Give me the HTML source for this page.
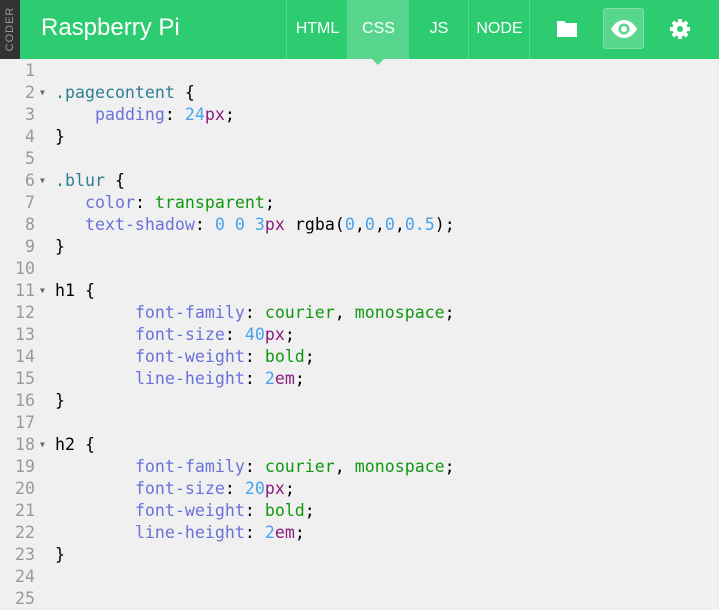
<!DOCTYPE html>
<html><head><style>
body{margin:0;width:719px;height:608px;background:#f0f0f0;overflow:hidden;font-family:"Liberation Sans",sans-serif;position:relative}
.hdr{position:absolute;left:0;top:0;width:719px;height:59px;background:#2ecc71}
.strip{position:absolute;left:0;top:0;width:20px;height:59px;background:#333}
.strip span{position:absolute;left:10px;top:29px;transform:translate(-50%,-50%) rotate(-90deg);color:#999;font-size:11px;letter-spacing:1px;white-space:nowrap}
.title{position:absolute;left:41px;top:14px;color:#fff;font-size:24px}
.tab{position:absolute;top:0;height:59px;line-height:58px;color:#fff;font-size:16px;text-align:center;border-left:1px solid #5ad98e}
.ico{position:absolute}
.code{position:absolute;left:0;top:60px;font-family:"DejaVu Sans Mono",monospace;font-size:16.6px;line-height:22px}
.ln{position:absolute;left:0;width:35px;text-align:right;color:#999}
.c{position:absolute;left:55px;white-space:pre;color:#000}
.ar{position:absolute;left:40px;font-size:8px;color:#666}
.s{color:#2d7f95}.p{color:#6a72d9}.v{color:#119911}.n{color:#47a3f0}.u{color:#8c1b80}
</style></head><body>
<div class="hdr">
<div class="strip"><span>CODER</span></div>
<div class="title">Raspberry Pi</div>
<div class="tab" style="left:286px;width:61px">HTML</div>
<div class="tab" style="left:347px;width:61px;background:#58d68d">CSS</div>
<div class="tab" style="left:408px;width:60px">JS</div>
<div class="tab" style="left:468px;width:61px">NODE</div>
<div style="position:absolute;left:529px;top:0;width:1px;height:59px;background:#5ad98e"></div>
<svg class="ico" style="left:556px;top:19px" width="22" height="20" viewBox="0 0 22 20"><path d="M1 2h7l2 2h11v14H1z" fill="#fff"/></svg>
<div style="position:absolute;left:603px;top:8px;width:41px;height:41px;border-radius:3px;background:#58d68d;border:1px solid #7fe0a8;box-sizing:border-box"></div>
<svg class="ico" style="left:610px;top:19px" width="28" height="20" viewBox="0 0 28 20"><path d="M1 10C5 3 10 1 14 1s9 2 13 9c-4 7-9 9-13 9S5 17 1 10z" fill="#fff"/><circle cx="14" cy="10" r="5.5" fill="#58d68d"/><circle cx="14" cy="10" r="3" fill="#fff"/></svg>
<svg class="ico" style="left:669px;top:18px" width="22" height="22" viewBox="0 0 22 22"><g fill="#fff"><circle cx="11" cy="11" r="7.5"/><rect x="9" y="1" width="4" height="20"/><rect x="1" y="9" width="20" height="4"/><rect x="9" y="1" width="4" height="20" transform="rotate(45 11 11)"/><rect x="9" y="1" width="4" height="20" transform="rotate(-45 11 11)"/></g><circle cx="11" cy="11" r="3" fill="#2ecc71"/></svg>
</div>
<div style="position:absolute;left:372px;top:59px;width:0;height:0;border-left:6px solid transparent;border-right:6px solid transparent;border-top:6px solid #58d68d"></div>
<div class="code">
<div class="ln" style="top:0">1</div>
<div class="ln" style="top:22px">2</div><div class="ar" style="top:22px">▼</div><div class="c" style="top:22px"><span class="s">.pagecontent</span> {</div>
<div class="ln" style="top:44px">3</div><div class="c" style="top:44px">    <span class="p">padding</span>: <span class="n">24</span><span class="u">px</span>;</div>
<div class="ln" style="top:66px">4</div><div class="c" style="top:66px">}</div>
<div class="ln" style="top:88px">5</div>
<div class="ln" style="top:110px">6</div><div class="ar" style="top:110px">▼</div><div class="c" style="top:110px"><span class="s">.blur</span> {</div>
<div class="ln" style="top:132px">7</div><div class="c" style="top:132px">   <span class="p">color</span>: <span class="v">transparent</span>;</div>
<div class="ln" style="top:154px">8</div><div class="c" style="top:154px">   <span class="p">text-shadow</span>: <span class="n">0</span> <span class="n">0</span> <span class="n">3</span><span class="u">px</span> rgba(<span class="n">0</span>,<span class="n">0</span>,<span class="n">0</span>,<span class="n">0.5</span>);</div>
<div class="ln" style="top:176px">9</div><div class="c" style="top:176px">}</div>
<div class="ln" style="top:198px">10</div>
<div class="ln" style="top:220px">11</div><div class="ar" style="top:220px">▼</div><div class="c" style="top:220px">h1 {</div>
<div class="ln" style="top:242px">12</div><div class="c" style="top:242px">        <span class="p">font-family</span>: <span class="v">courier</span>, <span class="v">monospace</span>;</div>
<div class="ln" style="top:264px">13</div><div class="c" style="top:264px">        <span class="p">font-size</span>: <span class="n">40</span><span class="u">px</span>;</div>
<div class="ln" style="top:286px">14</div><div class="c" style="top:286px">        <span class="p">font-weight</span>: <span class="v">bold</span>;</div>
<div class="ln" style="top:308px">15</div><div class="c" style="top:308px">        <span class="p">line-height</span>: <span class="n">2</span><span class="u">em</span>;</div>
<div class="ln" style="top:330px">16</div><div class="c" style="top:330px">}</div>
<div class="ln" style="top:352px">17</div>
<div class="ln" style="top:374px">18</div><div class="ar" style="top:374px">▼</div><div class="c" style="top:374px">h2 {</div>
<div class="ln" style="top:396px">19</div><div class="c" style="top:396px">        <span class="p">font-family</span>: <span class="v">courier</span>, <span class="v">monospace</span>;</div>
<div class="ln" style="top:418px">20</div><div class="c" style="top:418px">        <span class="p">font-size</span>: <span class="n">20</span><span class="u">px</span>;</div>
<div class="ln" style="top:440px">21</div><div class="c" style="top:440px">        <span class="p">font-weight</span>: <span class="v">bold</span>;</div>
<div class="ln" style="top:462px">22</div><div class="c" style="top:462px">        <span class="p">line-height</span>: <span class="n">2</span><span class="u">em</span>;</div>
<div class="ln" style="top:484px">23</div><div class="c" style="top:484px">}</div>
<div class="ln" style="top:506px">24</div>
<div class="ln" style="top:528px">25</div>
</div>
</body></html>
